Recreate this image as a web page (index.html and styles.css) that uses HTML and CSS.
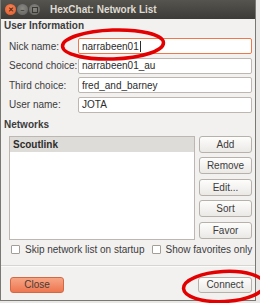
FILE: index.html
```html
<!DOCTYPE HTML>
<html>
<head>
<meta charset="UTF-8">
<title>HexChat: Network List</title>
<link rel="stylesheet" href="styles.css">
</head>

<body>
<div id="window">
	<div id="titlebar">
		<span class="wbtn close-w">&#x2715;</span>
		<span class="wbtn">&#x2013;</span>
		<span class="wbtn"><span class="sq"></span></span>
		<span class="title">HexChat: Network List</span>
	</div>

	<div class="section">User Information</div>
	<div id="userinfo">
		<label>Nick name:</label>
		<div class="entry focus">narrabeen01<span class="caret"></span></div>
		<label>Second choice:</label>
		<div class="entry">narrabeen01_au</div>
		<label>Third choice:</label>
		<div class="entry">fred_and_barney</div>
		<label>User name:</label>
		<div class="entry">JOTA</div>
	</div>

	<div class="section">Networks</div>
	<div id="networks">
		<div id="netlist">
			<div class="row selected">Scoutlink</div>
		</div>
		<div id="netbtns">
			<button>Add</button>
			<button>Remove</button>
			<button>Edit...</button>
			<button>Sort</button>
			<button>Favor</button>
		</div>
	</div>

	<div id="options">
		<span class="check"></span><span class="opt">Skip network list on startup</span>
		<span class="check"></span><span class="opt">Show favorites only</span>
	</div>

	<div class="separator"></div>

	<div id="footer">
		<button class="destructive">Close</button>
		<button>Connect</button>
	</div>
</div>

<svg id="marks" width="260" height="303" viewBox="0 0 260 303">
	<ellipse cx="113" cy="44.5" rx="50.5" ry="14.5" transform="rotate(-2 113 44.5)" />
	<ellipse cx="224" cy="286.5" rx="40.5" ry="15" transform="rotate(-3 224 286.5)" />
</svg>
</body>
</html>
```

FILE: styles.css
```css
body {margin:0; background:#e9e8e6; font-family:"Liberation Sans", Arial, sans-serif; font-size:10px; color:#3c3c3c;}
#window {width:254px; height:300px; background:#f2f1f0; border:1px solid #7a7873; border-top:none; overflow:hidden;}

#titlebar {height:19px; width:260px; background:linear-gradient(#55544f, #3c3b37); display:flex; align-items:center; padding-left:4px; box-sizing:border-box;}
.wbtn {width:11px; height:11px; border-radius:50%; background:radial-gradient(circle at 50% 40%, #8a8984, #5f5e5a); margin-right:1px; display:flex; align-items:center; justify-content:center; color:#3a3935; font-size:7px; font-weight:bold; line-height:1;}
.close-w {background:radial-gradient(circle at 50% 40%, #f88a5c, #e05424); color:#5a2a12;}
.sq {width:4px; height:4px; border:1px solid #3a3935;}
.title {margin-left:9px; color:#dfdbd2; font-weight:bold; font-size:10px;}

.section {font-weight:bold; height:14px; line-height:14px; padding-left:3px;}

#userinfo {display:grid; grid-template-columns:69px 174px; grid-auto-rows:16px; row-gap:3.6px; margin:5px 0 0 8px;}
#userinfo label {display:flex; align-items:center;}
.entry {background:#fff; border:1px solid #bcb8b1; border-radius:2px; box-sizing:border-box; padding-left:3px; display:flex; align-items:center; color:#2c2c2c;}
.entry.focus {border-color:#ea7a4b;}
.caret {width:1px; height:11px; background:#2c2c2c; margin-left:1px;}

#userinfo + .section {margin-top:5px;}

#networks {display:flex; gap:4px; margin:4px 0 0 8px; height:104px;}
#netlist {width:186px; background:#fff; border:1px solid #bcb8b1; box-sizing:border-box;}
.row {height:15px; line-height:15px; padding-left:3px;}
.selected {background:#dedcd8; font-weight:bold; color:#2c2c2c;}
#netbtns {display:flex; flex-direction:column; gap:4.5px; width:53px;}

button {font-family:"Liberation Sans", Arial, sans-serif; font-size:10px; color:#3c3c3c; height:17px; padding:0; border:1px solid #b6b2ab; border-radius:3px; background:linear-gradient(#fdfdfc, #ebe9e6);}

#options {display:flex; align-items:center; height:14px; margin:3px 0 0 10px; white-space:nowrap;}
.check {flex-shrink:0; width:9px; height:9px; box-sizing:border-box; border:1px solid #a39f98; border-radius:1px; background:#fff;}
.opt {flex-shrink:0; margin:0 7px 0 5px;}

.separator {height:1px; background:#d7d5d1; border-bottom:1px solid #fbfbfa; margin-top:8px;}

#footer {display:flex; justify-content:space-between; margin:10px 3px 0 9px;}
#footer button {height:16px; width:54px;}
#footer .destructive {background:linear-gradient(#f7a585, #ee7650); border-color:#d16a44; color:#4a3a34;}

#marks {position:absolute; left:0; top:0;}
#marks ellipse {fill:none; stroke:#e30000; stroke-width:3.5;}
```
